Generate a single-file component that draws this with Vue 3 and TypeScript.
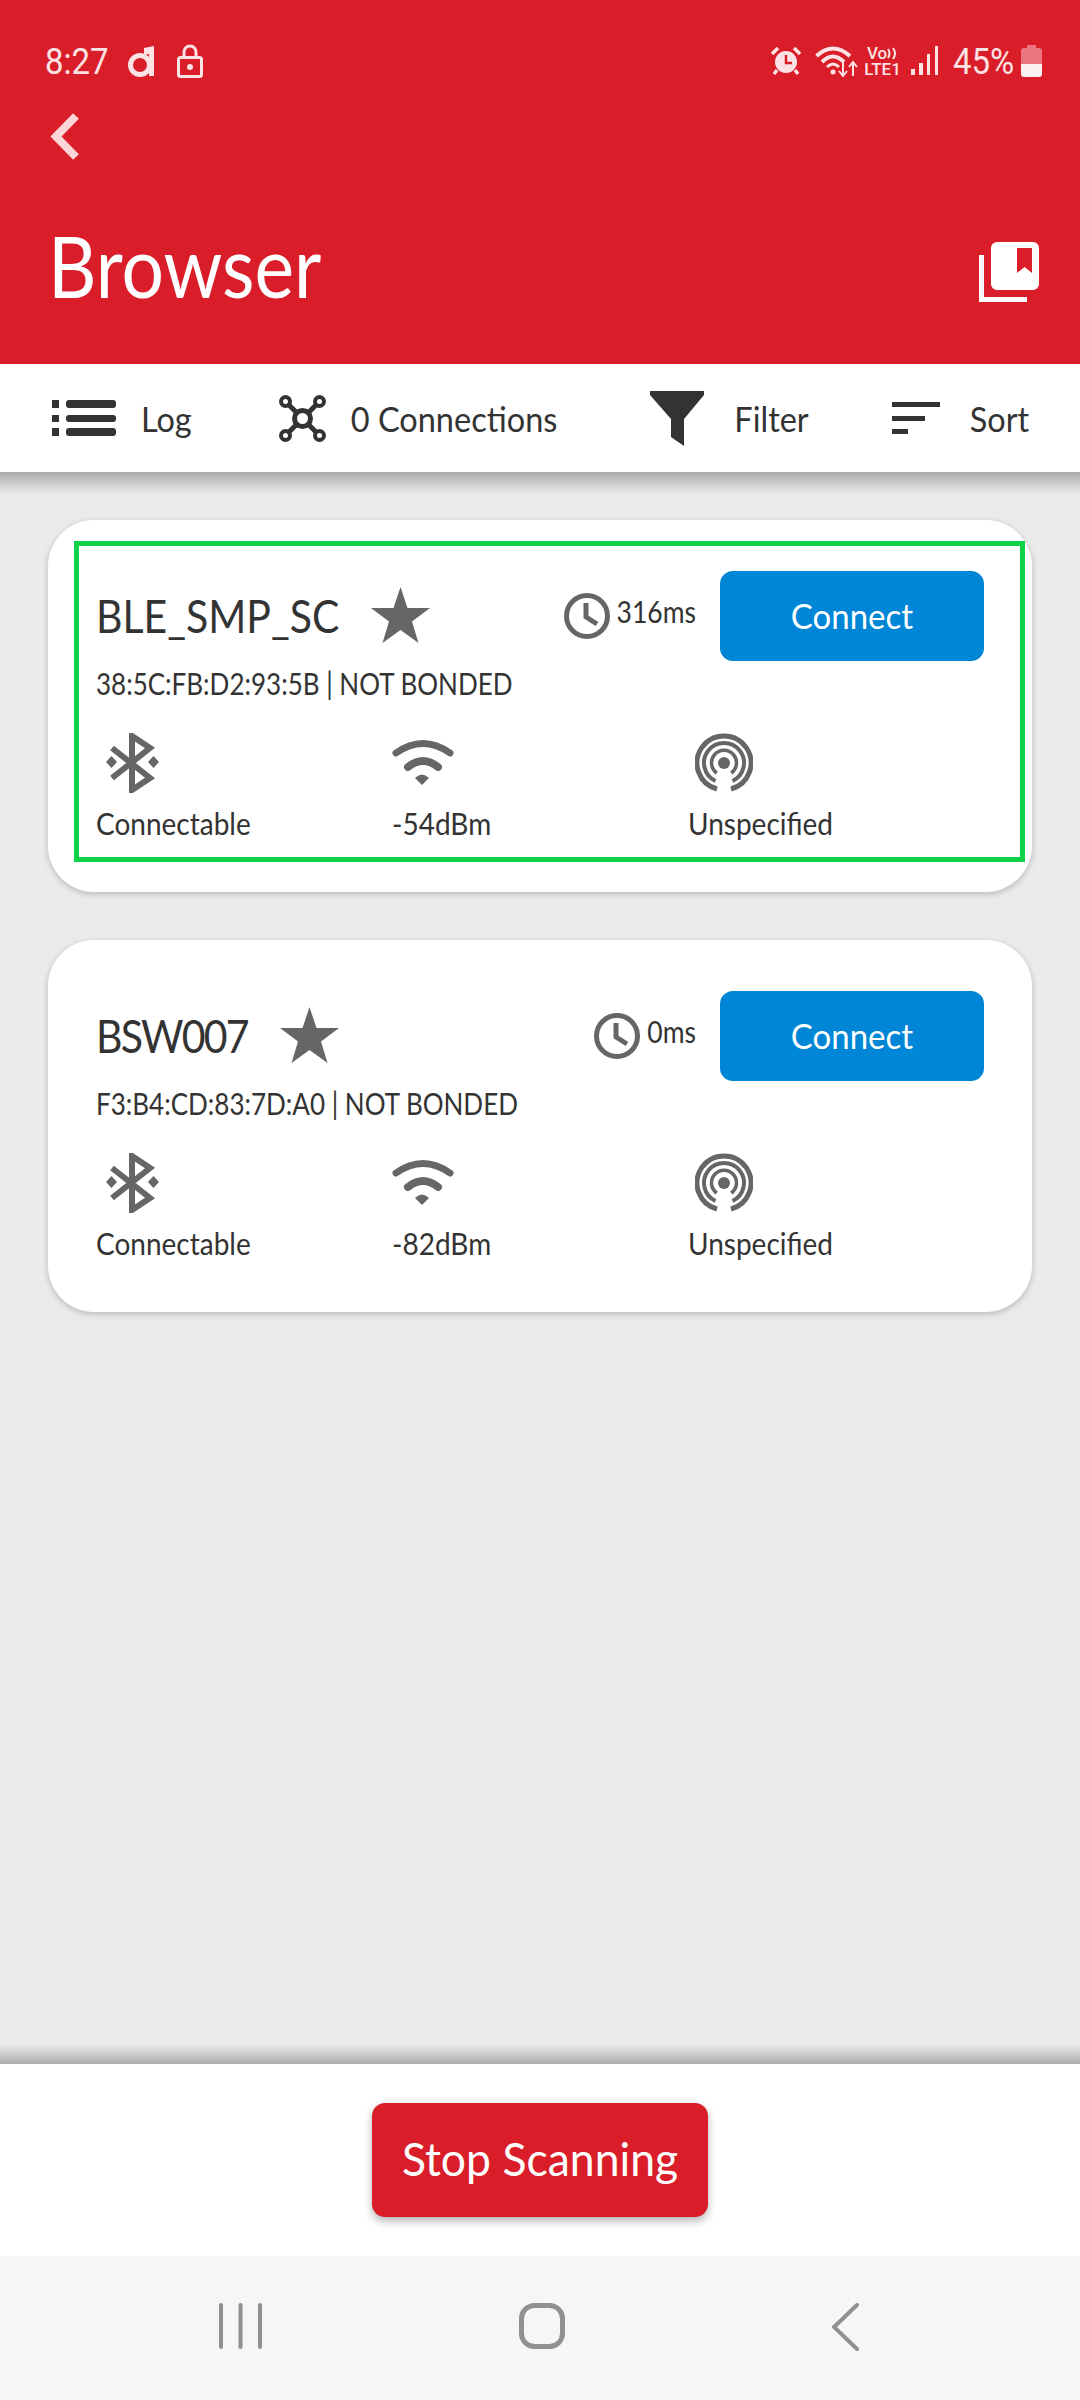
<template>
  <div class="page">
    <header class="appbar">
      <div class="status">
        <span class="clock-text">8:27</span>
        <svg class="st-d" width="27" height="32" viewBox="0 0 27 32">
          <circle cx="12" cy="20" r="9.500" fill="none" stroke="#fbe2e4" stroke-width="5" />
          <path d="M16 3 L26 1 V31 H21 V9 L16 10Z" fill="#fbe2e4" />
        </svg>
        <svg class="st-lock" width="26" height="34" viewBox="0 0 26 34">
          <path d="M7 14 V8 a6 6 0 0 1 12 0 V14" fill="none" stroke="#fbe2e4" stroke-width="3" />
          <rect x="1.500" y="13.500" width="23" height="19" rx="2" fill="none" stroke="#fbe2e4" stroke-width="3" />
          <circle cx="13" cy="23" r="3" fill="#fbe2e4" />
        </svg>
        <span class="grow"></span>
        <svg class="st-alarm" width="30" height="28" viewBox="0 0 30 28">
          <path d="M1 7 L7 1 M29 7 L23 1" stroke="#fbe2e4" stroke-width="3.500" fill="none" />
          <path d="M6 23 L3 27 M24 23 L27 27" stroke="#fbe2e4" stroke-width="3.500" fill="none" />
          <circle cx="15" cy="15" r="11" fill="#fbe2e4" />
          <path d="M15 8 V16 H21" stroke="#d91e2a" stroke-width="2.500" fill="none" />
        </svg>
        <svg class="st-wifi" width="43" height="32" viewBox="0 0 43 32">
          <path d="M1.500 11 Q18 -4 35 11" stroke="#fbe2e4" stroke-width="4" fill="none" />
          <path d="M7 17 Q18 6 29 17" stroke="#fbe2e4" stroke-width="4" fill="none" />
          <path d="M12 22 Q18 16 24 22" stroke="#fbe2e4" stroke-width="3" fill="none" />
          <circle cx="18" cy="27" r="2.500" fill="#fbe2e4" />
          <path d="M28 16 V30 M24 26 L28 31 L32 26 M38 31 V18 M34 22 L38 17 L42 22" stroke="#fbe2e4" stroke-width="2" fill="none" />
        </svg>
        <div class="volte">
          <span class="vo">Vo<svg width="11" height="13" viewBox="0 0 11 13"><path d="M1 2 Q4 6.500 1 11 M6 1 Q10 6.500 6 12" stroke="#fbe2e4" stroke-width="2" fill="none" /></svg></span>
          <span class="lte">LTE1</span>
        </div>
        <svg class="st-signal" width="27" height="30" viewBox="0 0 27 30">
          <rect x="0" y="23" width="4" height="6" fill="#fbe2e4" />
          <rect x="8" y="17" width="4" height="12" fill="#fbe2e4" />
          <rect x="16" y="8" width="3" height="21" fill="#fbe2e4" />
          <rect x="24" y="0" width="3" height="29" fill="#fbe2e4" />
        </svg>
        <span class="pct">45%</span>
        <svg class="st-batt" width="21" height="32" viewBox="0 0 21 32">
          <path d="M6 0 H15 V3 H18 a3 3 0 0 1 3 3 V19 H0 V6 a3 3 0 0 1 3 -3 H6Z" fill="#ec7680" />
          <path d="M0 19 H21 V29 a3 3 0 0 1 -3 3 H3 a3 3 0 0 1 -3 -3Z" fill="#fdf0f1" />
        </svg>
      </div>
      <svg class="back" width="30" height="47" viewBox="0 0 30 47">
        <path d="M26 3 L6 23.500 L26 44" fill="none" stroke="#fbd5d8" stroke-width="8" />
      </svg>
      <div class="title-row">
        <h1 class="title">Browser</h1>
        <svg width="60" height="60" viewBox="0 0 60 60">
          <path d="M2.500 13 V57.500 H48" fill="none" stroke="#fff" stroke-width="5" />
          <path fill-rule="evenodd" fill="#fff" d="M18 0 H54 a6 6 0 0 1 6 6 V42 a6 6 0 0 1 -6 6 H18 a6 6 0 0 1 -6 -6 V6 a6 6 0 0 1 6 -6Z M38 6 V31 L45.500 25 L53 31 V6Z" />
        </svg>
      </div>
    </header>

    <nav class="toolbar">
      <div class="tool">
        <svg width="64" height="36" viewBox="0 0 64 36" fill="#333">
          <rect x="0" y="0" width="7" height="8" />
          <rect x="0" y="15" width="7" height="7" />
          <rect x="0" y="28" width="7" height="8" />
          <rect x="14" y="0" width="50" height="8" rx="3" />
          <rect x="14" y="15" width="50" height="7" rx="3" />
          <rect x="14" y="28" width="50" height="8" rx="3" />
        </svg>
        <span class="tool-label">Log</span>
      </div>
      <div class="tool tool-conn">
        <svg width="47" height="47" viewBox="0 0 47 47" fill="none" stroke="#333">
          <path d="M9 9 L38 38 M38 9 L9 38" stroke-width="5" />
          <circle cx="6.500" cy="6.500" r="4.500" stroke-width="4" fill="#fff" />
          <circle cx="40.500" cy="6.500" r="4.500" stroke-width="4" fill="#fff" />
          <circle cx="6.500" cy="40.500" r="4.500" stroke-width="4" fill="#fff" />
          <circle cx="40.500" cy="40.500" r="4.500" stroke-width="4" fill="#fff" />
          <circle cx="23.500" cy="23.500" r="8" stroke-width="5" fill="#fff" />
        </svg>
        <span class="tool-label">0 Connections</span>
      </div>
      <div class="tool tool-filter">
        <svg width="54" height="55" viewBox="0 0 54 55" fill="#333">
          <path d="M0 0 H54 V4 L34 28 V55 L21 46 V28 L0 4Z" />
        </svg>
        <span class="tool-label">Filter</span>
      </div>
      <div class="tool tool-sort">
        <svg width="48" height="32" viewBox="0 0 48 32" fill="#333">
          <rect x="0" y="0" width="48" height="5" />
          <rect x="0" y="14" width="33" height="5" />
          <rect x="0" y="27" width="16" height="5" />
        </svg>
        <span class="tool-label">Sort</span>
      </div>
    </nav>

    <main class="list">
      <section v-for="d in devices" :key="d.mac" class="card">
        <div :class="['card-inner', { selected: d.selected }]">
          <div class="top-row">
            <span :class="['name', { compact: d.compact }]">{{ d.name }}</span>
            <svg class="star" width="59" height="56" viewBox="0 0 59 56">
              <polygon fill="#666" points="29.500,0 36.500,21 59,21 41,34.500 47.500,56 29.500,43 11.500,56 18,34.500 0,21 22.500,21" />
            </svg>
            <span class="grow"></span>
            <svg width="48" height="46" viewBox="0 0 48 46" fill="none" stroke="#666">
              <circle cx="24" cy="23" r="20.500" stroke-width="5" />
              <path d="M23 10 V24 L34 31" stroke-width="5" />
            </svg>
            <span class="age">{{ d.age }}</span>
            <button class="connect"><span>Connect</span></button>
          </div>
          <div class="addr">{{ d.mac }} | NOT BONDED</div>
          <div class="stats">
            <div class="stat">
              <svg class="ic-bt" width="53" height="60" viewBox="0 0 53 60" fill="none" stroke="#666">
                <path d="M6 15 L44 45 L26 57 V3 L44 15 L6 45" stroke-width="6" />
                <path d="M26 3 V57" stroke-width="6" />
                <path d="M5.500 23 L11 29 L5.500 35 L0 29Z M47.500 23 L53 29 L47.500 35 L42 29Z" fill="#666" stroke="none" />
              </svg>
              <span>Connectable</span>
            </div>
            <div class="stat">
              <svg class="ic-wifi" width="62" height="60" viewBox="0 0 62 60" fill="none" stroke="#666" stroke-linecap="round">
                <path d="M4 20 Q31 1 58 20" stroke-width="7" />
                <path d="M16 34 Q31 22 46 34" stroke-width="8" />
                <path d="M23 45 Q30 38 37 45 L30 52Z" fill="#666" stroke="none" />
              </svg>
              <span>{{ d.rssi }}</span>
            </div>
            <div class="stat">
              <svg class="ic-radar" width="58" height="60" viewBox="0 0 58 60" fill="none" stroke="#666">
                <path d="M22 56 A27 27 0 1 1 36 56" stroke-width="5" />
                <path d="M20.500 48 A20 20 0 1 1 37.500 48" stroke-width="4" />
                <path d="M21.800 40 A12.500 12.500 0 1 1 36.200 40" stroke-width="3.500" />
                <circle cx="29" cy="30" r="6" fill="#666" stroke="none" />
              </svg>
              <span>Unspecified</span>
            </div>
          </div>
        </div>
      </section>
    </main>

    <footer class="actions">
      <button class="stop"><span>Stop Scanning</span></button>
    </footer>

    <div class="navbar">
      <svg width="43" height="46" viewBox="0 0 43 46" stroke="#909090" stroke-width="4" stroke-linecap="round">
        <path d="M2 2 V44 M21.500 2 V44 M41 2 V44" />
      </svg>
      <svg width="46" height="46" viewBox="0 0 46 46" fill="none" stroke="#909090" stroke-width="5">
        <rect x="2.500" y="2.500" width="41" height="41" rx="13" />
      </svg>
      <svg class="nav-back" width="27" height="48" viewBox="0 0 27 48" fill="none" stroke="#909090" stroke-width="4" stroke-linecap="round">
        <path d="M25 2 L2 24 L25 46" />
      </svg>
    </div>
  </div>
</template>

<script setup lang="ts">
interface Device {
  name: string
  mac: string
  age: string
  rssi: string
  selected: boolean
  compact: boolean
}

const devices: Device[] = [
  { name: 'BLE_SMP_SC', mac: '38:5C:FB:D2:93:5B', age: '316ms', rssi: '-54dBm', selected: true, compact: false },
  { name: 'BSW007', mac: 'F3:B4:CD:83:7D:A0', age: '0ms', rssi: '-82dBm', selected: false, compact: true },
]
</script>

<style>
html,
body {
  margin: 0;
  background: #ebebeb;
}
</style>

<style scoped>
.page {
  width: 1080px;
  height: 2400px;
  display: flex;
  flex-direction: column;
  font-family: Lato, 'Liberation Sans', sans-serif;
  color: #333;
  background: #ebebeb;
  overflow: hidden;
}

.appbar {
  height: 364px;
  box-sizing: border-box;
  background: #d91e2a;
  color: #fff;
  padding: 44px 38px 0 45px;
}

.status {
  display: flex;
  align-items: center;
  height: 34px;
  color: #fbe2e4;
}

.grow {
  flex: 1;
}

.clock-text {
  font-family: Roboto, sans-serif;
  font-size: 33px;
  width: 64px;
  white-space: nowrap;
  transform: scaleY(1.12);
}

.st-d {
  margin-left: 19px;
}

.st-lock {
  margin-left: 22px;
}

.st-wifi {
  margin-left: 14px;
}

.volte {
  margin-left: 6px;
  width: 37px;
  display: flex;
  flex-direction: column;
  align-items: center;
  font-family: Roboto, sans-serif;
  font-weight: 500;
  line-height: 16px;
}

.vo {
  font-size: 17px;
  display: flex;
  align-items: center;
}

.lte {
  font-size: 17px;
}

.st-signal {
  margin-left: 10px;
}

.pct {
  font-family: Roboto, sans-serif;
  font-size: 33px;
  margin-left: 15px;
  width: 62px;
  white-space: nowrap;
  transform: scaleY(1.12);
}

.st-batt {
  margin-left: 6px;
}

.back {
  display: block;
  margin: 35px 0 0 5px;
}

.title-row {
  display: flex;
  justify-content: space-between;
  align-items: center;
  margin: 63px 3px 0 3px;
}

.title {
  margin: 0 0 14px;
  font-size: 75px;
  font-weight: 400;
  line-height: 84px;
  transform: scaleY(1.13);
}

.toolbar {
  position: relative;
  z-index: 1;
  height: 108px;
  box-sizing: border-box;
  background: #fff;
  display: flex;
  align-items: center;
  padding-left: 52px;
  font-size: 32.500px;
}

.toolbar::after {
  content: '';
  position: absolute;
  left: 0;
  right: 0;
  top: 100%;
  height: 22px;
  background: linear-gradient(#aaaaaa, #ebebeb);
}

.tool {
  display: flex;
  align-items: center;
  gap: 25px;
}

.tool-conn {
  margin-left: 87px;
}

.tool-filter {
  margin-left: 93px;
  gap: 30px;
}

.tool-sort {
  margin-left: 83px;
  gap: 30px;
}

.tool-label {
  transform: scaleY(1.08);
}

.list {
  flex: 1;
  padding: 48px 48px 0;
  display: flex;
  flex-direction: column;
  gap: 48px;
}

.card {
  background: #fff;
  border-radius: 46px;
  box-shadow: 0 2px 6px rgba(0, 0, 0, 0.22);
  padding: 21px 7px 30px 26px;
}

.card-inner {
  border: 5px solid transparent;
  padding: 25px 36px 0 17px;
  height: 321px;
  box-sizing: border-box;
}

.card-inner.selected {
  border-color: #0fd14a;
}

.top-row {
  display: flex;
  align-items: center;
  height: 90px;
}

.name {
  font-size: 41px;
  line-height: 50px;
  transform: scaleY(1.12);
}

.name.compact {
  letter-spacing: -1.800px;
}

.star {
  margin-left: 32px;
  margin-top: -2px;
}

.age {
  font-size: 26.500px;
  margin: -10px 24px 0 6px;
  transform: scaleY(1.16);
}

.connect {
  width: 264px;
  height: 90px;
  border: none;
  border-radius: 13px;
  background: #0086d6;
  color: #fff;
  font: inherit;
  font-size: 33px;
  padding: 0 0 2px;
}

.connect span,
.stop span {
  display: inline-block;
  transform: scaleY(1.06);
}

.addr {
  font-size: 26px;
  line-height: 40px;
  margin-top: 2px;
  transform: scaleY(1.18);
}

.stats {
  display: grid;
  grid-template-columns: repeat(3, 296px);
  margin-top: 30px;
  font-size: 28px;
}

.stat {
  display: flex;
  flex-direction: column;
  align-items: flex-start;
}

.stat span {
  line-height: 40px;
  margin-top: 10px;
  transform: scaleY(1.09);
}

.ic-bt {
  margin-left: 10px;
}

.ic-wifi {
  margin-left: 0;
}

.ic-radar {
  margin-left: 7px;
}

.actions {
  position: relative;
  height: 192px;
  background: #fff;
  display: flex;
  justify-content: center;
  align-items: flex-start;
  padding-top: 39px;
  box-sizing: border-box;
}

.actions::before {
  content: '';
  position: absolute;
  left: 0;
  right: 0;
  bottom: 100%;
  height: 20px;
  background: linear-gradient(#ebebeb, #adadad);
}

.stop {
  width: 336px;
  height: 114px;
  border: none;
  border-radius: 13px;
  background: #d91e2a;
  color: #fff;
  font: inherit;
  font-size: 44.500px;
  padding: 0 0 5px;
  box-shadow: 0 4px 8px rgba(0, 0, 0, 0.3);
}

.navbar {
  height: 144px;
  background: #f6f6f6;
  display: flex;
  align-items: flex-start;
  gap: 257px;
  padding: 47px 0 0 219px;
  box-sizing: border-box;
}

.nav-back {
  margin-left: 10px;
}
</style>
